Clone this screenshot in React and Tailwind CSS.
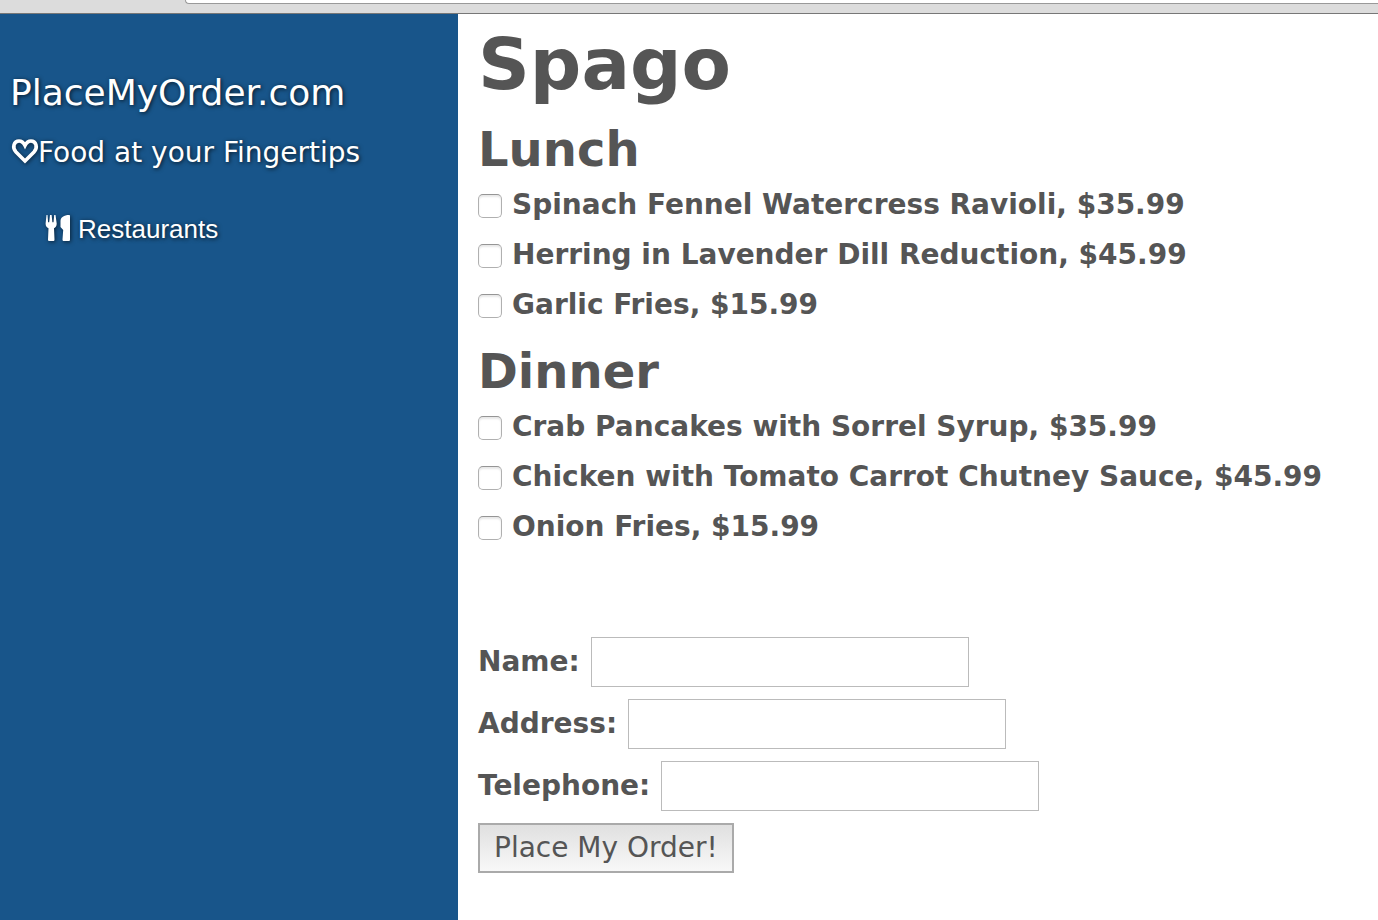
const menus = [
  {
    title: 'Lunch',
    items: [
      { name: 'Spinach Fennel Watercress Ravioli', price: '35.99' },
      { name: 'Herring in Lavender Dill Reduction', price: '45.99' },
      { name: 'Garlic Fries', price: '15.99' },
    ],
  },
  {
    title: 'Dinner',
    items: [
      { name: 'Crab Pancakes with Sorrel Syrup', price: '35.99' },
      { name: 'Chicken with Tomato Carrot Chutney Sauce', price: '45.99' },
      { name: 'Onion Fries', price: '15.99' },
    ],
  },
];

const fields = [
  { id: 'name', label: 'Name:', type: 'text' },
  { id: 'address', label: 'Address:', type: 'text' },
  { id: 'telephone', label: 'Telephone:', type: 'tel' },
];

function HeartIcon() {
  return (
    <svg aria-hidden="true" className="h-7 w-7 shrink-0 overflow-visible drop-shadow-[1px_1px_2px_rgba(0,0,0,0.6)]" viewBox="0 0 28 28" fill="none" stroke="white" strokeWidth="3.6">
      <path d="M15 22 6 13C1.800 8.500 4 2 9 2c3 0 5 2.500 6 4.500C16 4.500 18 2 21 2c5 0 7.200 6.500 3 11Z" />
    </svg>
  );
}

function CutleryIcon() {
  return (
    <svg aria-hidden="true" className="h-7 w-7 shrink-0 overflow-visible drop-shadow-[1px_1px_2px_rgba(0,0,0,0.6)]" viewBox="0 0 28 28" fill="white">
      <path d="M2.500 0h1l.6 7.200h1.100L6 0h1.600l.8 7.200h1.100L10.200 0h1.300l1.200 8.500c0 2.500-1 4-2.700 4.700l.5 11.300c0 1-.5 1.500-1.500 1.500H5.500c-1 0-1.500-.5-1.500-1.500l.5-11.300C2.600 12.500 1.600 11 1.600 8.500Z" />
      <path d="M25 0c-5 0-8.500 2.500-8.500 6v6l2.700 3-.7 9.500c0 1 .5 1.500 1.500 1.500h4.500c1 0 1.500-.5 1.500-1.500V1c0-.6-.4-1-1-1Z" />
    </svg>
  );
}

function MenuSection({ title, items }) {
  return (
    <section className="mb-[10px]">
      <h2 className="text-[48px] leading-[62px] font-bold">{title}</h2>
      <ul>
        {items.map((item) => (
          <li key={item.name}>
            <label className="flex h-[50px] items-center gap-[10px]">
              <input
                type="checkbox"
                className="mt-[2px] size-6 shrink-0 appearance-none rounded-[5px] border border-[#b0b0b0] border-t-[#959595] bg-white shadow-[inset_0_2px_2px_#e8e8e8] checked:bg-[#18558a]"
              />
              <span>{item.name}, ${item.price}</span>
            </label>
          </li>
        ))}
      </ul>
    </section>
  );
}

export default function App() {
  return (
    <div className="flex min-h-screen flex-col bg-white font-['DejaVu_Sans',Verdana,sans-serif] text-[28px] leading-[34px] text-[#555555]">
      <div className="h-[14px] border-b border-[#777777] bg-[#dcdcdc] pl-[185px]">
        <div className="h-1 rounded-bl-[5px] border-b border-l border-[#999999] bg-white" />
      </div>
      <div className="flex grow">
        <aside className="w-[458px] shrink-0 bg-[#18558a] px-[10px] pt-14 text-white [text-shadow:1px_1px_4px_rgba(0,0,0,0.75)]">
          <h1 className="text-[36px] leading-[46px]">PlaceMyOrder.com</h1>
          <h2 className="mt-5 flex items-center">
            <HeartIcon />
            Food at your Fingertips
          </h2>
          <nav className="mt-[42px] pl-[34px]">
            <a href="#restaurants" className="flex items-center gap-[6px] font-['Liberation_Sans',Arial,sans-serif] text-[26px]">
              <CutleryIcon />
              Restaurants
            </a>
          </nav>
        </aside>
        <main className="min-w-0 grow pt-[6px] pl-5 font-bold">
          <h1 className="text-[72px] leading-[88px] font-bold">Spago</h1>
          <div className="pt-[10px]">
            {menus.map((menu) => (
              <MenuSection key={menu.title} title={menu.title} items={menu.items} />
            ))}
          </div>
          <form className="mt-[85px]" onSubmit={(event) => event.preventDefault()}>
            {fields.map((field) => (
              <div key={field.id} className="mb-3 flex items-center gap-[11px]">
                <label htmlFor={field.id}>{field.label}</label>
                <input
                  id={field.id}
                  name={field.id}
                  type={field.type}
                  className="h-[50px] w-[378px] border border-[#bbbbbb] bg-white px-2 font-normal"
                />
              </div>
            ))}
            <button type="submit" className="h-[50px] border-2 border-[#aaaaaa] bg-linear-to-b from-[#e0e0e0] to-[#f8f8f8] px-[14px] font-normal">
              Place My Order!
            </button>
          </form>
        </main>
      </div>
    </div>
  );
}
